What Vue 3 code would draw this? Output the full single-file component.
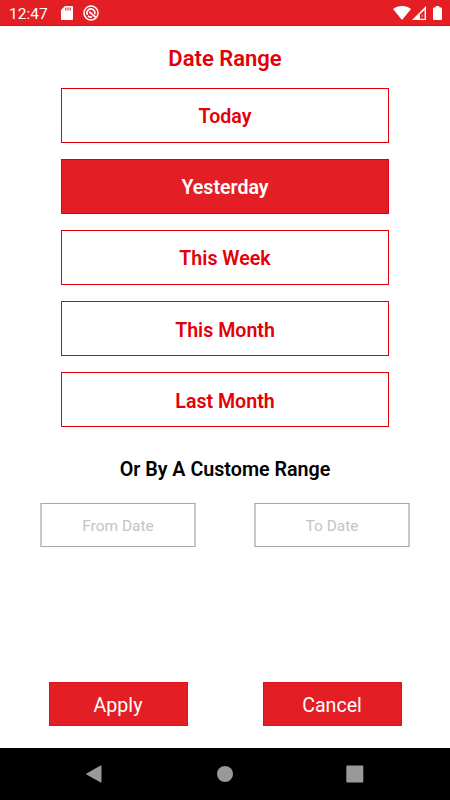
<template>
  <div class="screen">
    <header class="status-bar">
      <span class="clock">12:47</span>
      <svg class="sd-icon" width="12" height="14" viewBox="0 0 12 14">
        <path fill="#fff" d="M4 0h7a1 1 0 0 1 1 1v12a1 1 0 0 1-1 1H1a1 1 0 0 1-1-1V4z" />
        <path stroke="#e31e24" stroke-width="1.1" d="M4.7 1.5v3M7 1.5v3M9.3 1.5v3" />
      </svg>
      <svg class="sync-icon" width="16" height="16" viewBox="0 0 16 16" fill="none" stroke="#fff">
        <circle cx="8" cy="8" r="7" stroke-width="1.5" />
        <path stroke-width="1.7" d="M4.4 9.8A4 4 0 1 1 11.7 9.2M5 10.9A4 4 0 0 0 9.2 11.8" />
        <path stroke-width="1.8" d="M6.3 6.8L12.8 12.4" />
      </svg>
      <div class="spacer"></div>
      <svg class="wifi-icon" width="18" height="14" viewBox="0 0 18 14">
        <path fill="#fff" d="M9 14L0 3.1C2.4 1.1 5.5 0 9 0s6.6 1.1 9 3.1z" />
      </svg>
      <svg class="signal-icon" width="14" height="14" viewBox="0 0 14 14">
        <path fill="#fff" fill-rule="evenodd" d="M14 0v14H0zM12.6 4L8 8.3v4.4h4.6z" />
        <path fill="#fff" opacity="0.4" d="M9.6 9l1.3-1.3v3.6H9.6z" />
      </svg>
      <svg class="battery-icon" width="9" height="14" viewBox="0 0 9 14">
        <path fill="#fff" d="M2.7 0h3.6v1.4H8a1 1 0 0 1 1 1V13a1 1 0 0 1-1 1H1a1 1 0 0 1-1-1V2.4a1 1 0 0 1 1-1h1.7z" />
      </svg>
    </header>

    <main class="content">
      <h1 class="title">Date Range</h1>

      <div class="range-list">
        <button v-for="range in ranges" :key="range" class="range-btn" :class="{ active: range === selected }"
          @click="selected = range">
          {{ range }}
        </button>
      </div>

      <h2 class="subtitle">Or By A Custome Range</h2>

      <div class="date-row">
        <input v-model="fromDate" class="date-input" placeholder="From Date" />
        <input v-model="toDate" class="date-input" placeholder="To Date" />
      </div>

      <div class="action-row">
        <button class="action-btn">Apply</button>
        <button class="action-btn" @click="reset">Cancel</button>
      </div>
    </main>

    <nav class="nav-bar">
      <svg width="18" height="18" viewBox="0 0 18 18">
        <path fill="#999" stroke="#999" stroke-linejoin="round" d="M1.5 9L16 .8v16.4z" />
      </svg>
      <svg width="18" height="18" viewBox="0 0 18 18">
        <circle cx="9" cy="9" r="8" fill="#999" />
      </svg>
      <svg width="18" height="18" viewBox="0 0 18 18">
        <rect x=".3" y=".5" width="17" height="17" rx="1" fill="#999" />
      </svg>
    </nav>
  </div>
</template>

<script setup>
import { ref } from 'vue';

const ranges = ['Today', 'Yesterday', 'This Week', 'This Month', 'Last Month'];
const selected = ref('Yesterday');
const fromDate = ref('');
const toDate = ref('');

function reset() {
  selected.value = 'Yesterday';
  fromDate.value = '';
  toDate.value = '';
}
</script>

<style>
body {
  margin: 0;
}
</style>

<style scoped>
.screen {
  width: 450px;
  height: 800px;
  display: flex;
  flex-direction: column;
  overflow: hidden;
  background: #fff;
  font-family: Roboto, "Liberation Sans", sans-serif;
}

.status-bar {
  box-sizing: border-box;
  height: 26px;
  flex-shrink: 0;
  display: flex;
  align-items: center;
  padding: 1px 8px 0 9px;
  background: #e31e24;
  border-bottom: 1px solid #e10a10;
  color: #fff;
}

.clock {
  width: 52px;
  padding-top: 2px;
  font-size: 15.5px;
  line-height: 24px;
}

.sync-icon {
  margin-left: 10px;
}

.spacer {
  flex: 1;
}

.signal-icon {
  margin-left: 1px;
}

.battery-icon {
  margin-left: 7px;
}

.content {
  flex: 1;
  display: flex;
  flex-direction: column;
  align-items: center;
}

.title {
  margin: 19px 0 0;
  font-size: 22px;
  line-height: 28px;
  font-weight: 600;
  color: #e30007;
}

.range-list {
  display: flex;
  flex-direction: column;
  gap: 16.1px;
  margin-top: 15px;
}

.range-btn {
  box-sizing: border-box;
  width: 328px;
  height: 55px;
  padding: 2.6px 0 0;
  border: 1px solid #e1000a;
  background: #fff;
  color: #e30007;
  font-family: inherit;
  font-size: 19.6px;
  font-weight: 600;
}

.range-btn.active {
  background: #e31e24;
  color: #fff;
}

.subtitle {
  margin: 28.6px 0 0;
  font-size: 19.7px;
  line-height: 28px;
  font-weight: 600;
  color: #000;
}

.date-row {
  display: flex;
  gap: 58px;
  margin-top: 19px;
}

.date-input {
  box-sizing: border-box;
  width: 156px;
  height: 44px;
  padding: 2px 0 0;
  border-style: solid;
  border-width: 1px 2px;
  border-color: #a8a8a8 #c8c8c8;
  border-radius: 0;
  outline: none;
  font-family: inherit;
  font-size: 15.5px;
  text-align: center;
}

.date-input::placeholder {
  color: #c4c4c4;
}

.action-row {
  display: flex;
  gap: 75px;
  margin-top: auto;
  margin-bottom: 22px;
}

.action-btn {
  width: 139px;
  height: 44px;
  padding: 2px 0 0;
  border: 1px solid #e1121a;
  background: #e31e24;
  color: #fff;
  font-family: inherit;
  font-size: 19.6px;
}

.nav-bar {
  height: 52px;
  flex-shrink: 0;
  display: flex;
  align-items: center;
  justify-content: space-between;
  box-sizing: border-box;
  padding: 0 86px 0 85px;
  background: #000;
}
</style>
